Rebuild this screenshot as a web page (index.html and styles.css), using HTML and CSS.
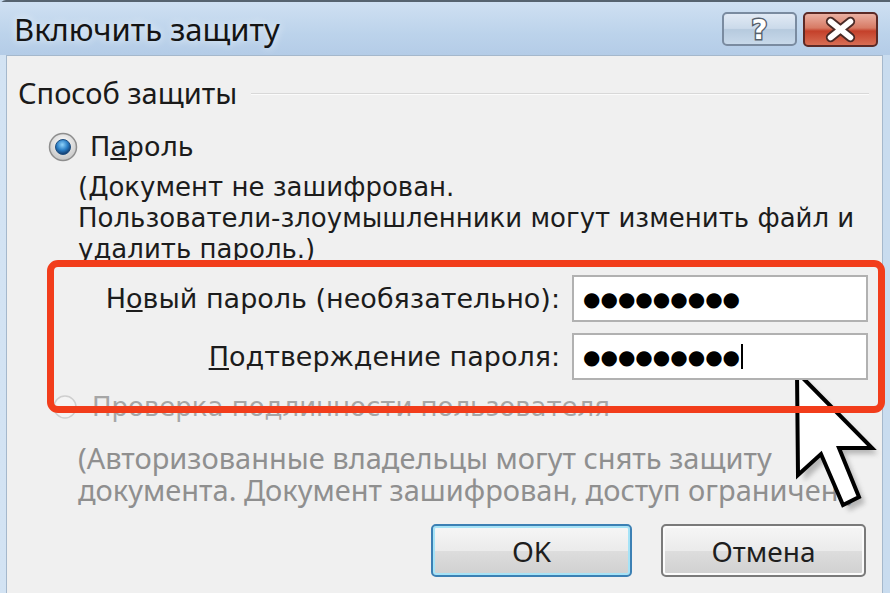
FILE: index.html
```html
<!DOCTYPE html>
<html lang="ru">
  <head>
    <meta charset="UTF-8">
    <title>Включить защиту</title>
    <link rel="stylesheet" href="styles.css">
  </head>
  <body>
    <div class="window" role="dialog" aria-labelledby="dlg-title">
      <div class="titlebar">
        <span class="title" id="dlg-title">Включить защиту</span>
        <div class="caption-buttons">
          <button class="cap-btn help" aria-label="Справка">
            <svg viewBox="0 0 75 34" width="75" height="34" aria-hidden="true">
              <text x="37.5" y="28" class="help-glyph">?</text>
            </svg>
          </button>
          <button class="cap-btn close" aria-label="Закрыть">
            <svg viewBox="0 0 75 35" width="75" height="35" aria-hidden="true">
              <path d="M27 9 L48 26 M48 9 L27 26" class="x-outline" />
              <path d="M27 9 L48 26 M48 9 L27 26" class="x-fill" />
            </svg>
          </button>
        </div>
      </div>

      <div class="client">
        <div class="group-title">
          <span>Способ защиты</span>
          <span class="rule"></span>
        </div>

        <div class="option">
          <svg class="radio" viewBox="0 0 30 30" width="30" height="30" aria-hidden="true">
            <defs>
              <radialGradient id="ring" cx="50%" cy="35%" r="60%">
                <stop offset="0" stop-color="#ffffff" />
                <stop offset="1" stop-color="#c9c9c9" />
              </radialGradient>
              <radialGradient id="dot" cx="45%" cy="35%" r="65%">
                <stop offset="0" stop-color="#8fd3fb" />
                <stop offset="0.55" stop-color="#2b7fc6" />
                <stop offset="1" stop-color="#10386a" />
              </radialGradient>
            </defs>
            <circle cx="15" cy="15" r="13.5" fill="url(#ring)" stroke="#8e8e8e" stroke-width="1.5" />
            <circle cx="15" cy="15" r="7.5" fill="url(#dot)" stroke="#1f4f80" stroke-width="1" />
          </svg>
          <span>П<u>а</u>роль</span>
        </div>

        <p class="desc">
          (Документ не зашифрован.<br>
          Пользователи-злоумышленники могут изменить файл и<br>
          удалить пароль.)
        </p>

        <div class="fields">
          <label class="field-label">Н<u>о</u>вый пароль (необязательно):</label>
          <div class="pw">●●●●●●●●●</div>
          <label class="field-label"><u>П</u>одтверждение пароля:</label>
          <div class="pw">●●●●●●●●●<span class="caret"></span></div>
        </div>

        <div class="option disabled">
          <svg class="radio" viewBox="0 0 24 24" width="24" height="24" aria-hidden="true">
            <circle cx="12" cy="12" r="11" fill="#f4f4f4" stroke="#cfcfcf" stroke-width="1.5" />
          </svg>
          <span>Проверка подлинности пользователя</span>
        </div>

        <p class="note">
          (Авторизованные владельцы могут снять защиту<br>
          документа. Документ зашифрован, доступ ограничен.)
        </p>

        <div class="actions">
          <button class="btn default">OK</button>
          <button class="btn cancel">Отмена</button>
        </div>
      </div>
    </div>

    <svg class="pointer" viewBox="0 0 95 150" width="95" height="150" aria-hidden="true">
      <defs>
        <filter id="soft" x="-20%" y="-20%" width="140%" height="140%">
          <feGaussianBlur stdDeviation="2.5" />
        </filter>
      </defs>
      <polygon points="12,10 13,113 36,92 58,143 74,135 54,86 87,86" fill="#6f6f6f" opacity="0.45" filter="url(#soft)" />
      <polygon points="6,4 7,107 30,86 52,137 68,129 48,80 81,80" fill="#ffffff" stroke="#000000" stroke-width="4" stroke-linejoin="miter" />
    </svg>
  </body>
</html>
```

FILE: styles.css
```css
body {
  margin: 0;
  width: 890px;
  height: 593px;
  overflow: hidden;
  position: relative;
  background: #c6daee;
  font-family: "DejaVu Sans", sans-serif;
  color: #1c1c1c;
}

.window {
  height: 593px;
  box-sizing: border-box;
  display: flex;
  flex-direction: column;
  padding: 0 7px 0 6px;
  border-top: 2px solid #56636f;
  border-top-left-radius: 6px;
  background: linear-gradient(90deg, #d3e3f3, #c2d7ec 40%, #c9dcef);
}

/* caption */
.titlebar {
  height: 53px;
  margin: 0 -7px 0 -6px;
  padding: 0 12px 0 14px;
  display: flex;
  align-items: center;
  justify-content: space-between;
  background: linear-gradient(#cfe0f2, #bcd3eb 60%, #b4cce7);
}

.title {
  font-family: "Noto Sans", sans-serif;
  font-size: 31px;
  color: #141414;
  text-shadow: 0 0 8px rgba(255, 255, 255, .8);
}

.caption-buttons {
  display: flex;
  gap: 6px;
  margin-top: 2px;
}

.cap-btn {
  width: 75px;
  height: 35px;
  padding: 0;
  border-radius: 5px;
  display: flex;
  align-items: center;
  justify-content: center;
}

.help {
  height: 34px;
  border: 2px solid #7a8ba0;
  background: linear-gradient(#e1eaf5, #cbdaea 48%, #b6cade 52%, #c8d9ea);
}

.close {
  border: 2px solid #5c2a26;
  background: linear-gradient(#eab0a2, #d77a64 45%, #c4402a 55%, #d86e54);
}

.help-glyph {
  font-family: "DejaVu Sans", sans-serif;
  font-weight: bold;
  font-size: 29px;
  text-anchor: middle;
  fill: #ffffff;
  stroke: #55606c;
  stroke-width: 3px;
  paint-order: stroke fill;
}

.x-outline {
  stroke: #4a2a26;
  stroke-width: 10;
  stroke-linecap: round;
  fill: none;
}

.x-fill {
  stroke: #ffffff;
  stroke-width: 6;
  stroke-linecap: round;
  fill: none;
}

/* dialog body */
.client {
  flex: 1;
  position: relative;
  background: #f0f0f0;
  border: 1px solid #a5b8cc;
  border-bottom: none;
}

.group-title {
  display: flex;
  align-items: center;
  gap: 14px;
  margin: 20px 13px 0 11px;
  font-family: "Noto Sans", sans-serif;
  font-size: 29px;
  line-height: 34px;
  color: #1a1a1a;
}

.rule {
  flex: 1;
  height: 1px;
  margin-top: 2px;
  background: #d8d8d8;
  border-bottom: 1px solid #fbfbfb;
}

.option {
  display: flex;
  align-items: center;
  gap: 12px;
  margin: 20px 0 0 41px;
  font-size: 27px;
  line-height: 34px;
}

.desc {
  margin: 8px 0 0 71px;
  height: 88px;
  overflow: hidden;
  font-size: 26px;
  line-height: 31px;
  white-space: nowrap;
}

.fields {
  position: relative;
  z-index: 1;
  margin: 0 -3px 0 40px;
  padding: 8px 10px 26px 0;
  border: 7px solid #f23d1b;
  border-radius: 11px;
  display: grid;
  grid-template-columns: 1fr 296px;
  column-gap: 12px;
  row-gap: 11px;
}

.field-label {
  align-self: center;
  text-align: right;
  font-size: 27px;
  white-space: nowrap;
}

.pw {
  height: 47px;
  box-sizing: border-box;
  display: flex;
  align-items: center;
  padding-left: 9px;
  background: #ffffff;
  border: 2px solid #b1b1b1;
  font-size: 20px;
  letter-spacing: 0;
  color: #000000;
}

.caret {
  width: 2px;
  height: 25px;
  margin-left: 1px;
  background: #000000;
}

.option.disabled {
  margin: -23px 0 0 46px;
  gap: 15px;
  font-size: 26px;
  color: #a6a6a6;
  white-space: nowrap;
}

.note {
  margin: 18px 0 0 71px;
  font-family: "Noto Sans", sans-serif;
  font-size: 29px;
  line-height: 32px;
  color: #8f8f8f;
  white-space: nowrap;
}

.actions {
  display: flex;
  justify-content: flex-end;
  gap: 29px;
  margin: 18px 16px 0 0;
}

.btn {
  height: 53px;
  border-radius: 5px;
  font-family: "Noto Sans", sans-serif;
  font-size: 28px;
  color: #1e1e1e;
  background: linear-gradient(#f6f6f6, #ebebeb 50%, #dddddd 51%, #d0d0d0);
}

.default {
  width: 201px;
  border: 2px solid #3c80b4;
  box-shadow: inset 0 0 0 2px #a6e3f7;
}

.cancel {
  width: 205px;
  border: 2px solid #7a7a7a;
  box-shadow: inset 0 0 0 2px #fbfbfb;
}

/* mouse pointer drawn over the dialog */
.pointer {
  position: absolute;
  left: 791px;
  top: 368px;
}
```
